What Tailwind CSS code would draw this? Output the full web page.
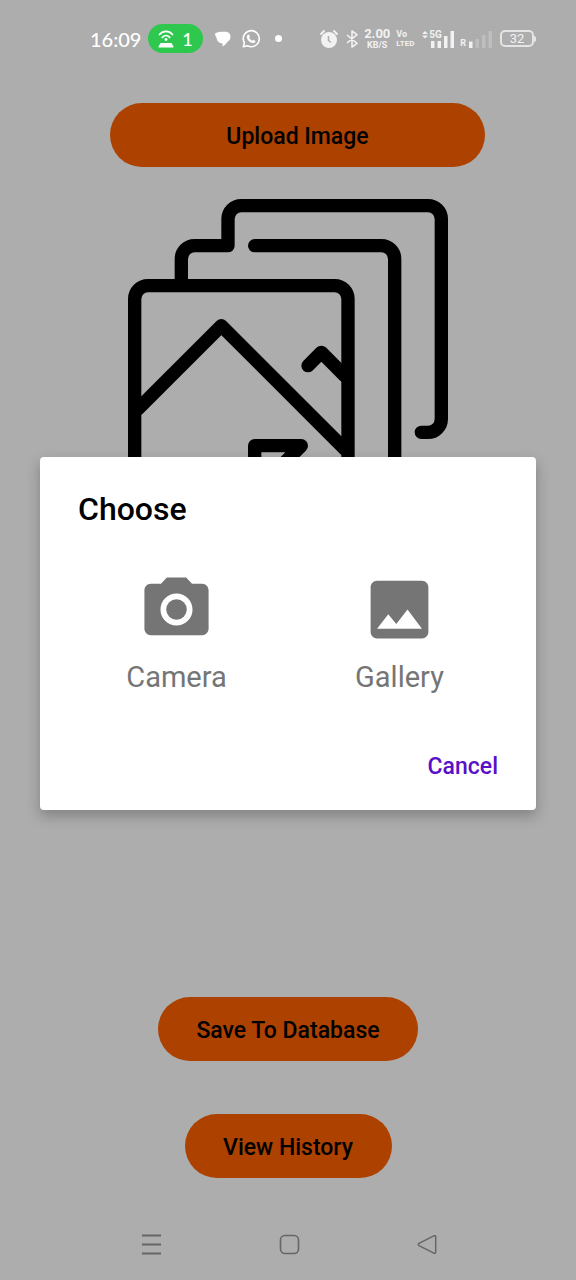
<!DOCTYPE html>
<html lang="en">
<head>
<meta charset="utf-8">
<meta name="viewport" content="width=device-width, initial-scale=1">
<title>Upload Image</title>
<script src="https://cdn.jsdelivr.net/npm/@tailwindcss/browser@4"></script>
</head>
<body class="bg-[#adadad] font-['Roboto',sans-serif] text-black">
<div class="relative flex min-h-screen flex-col">

  <!-- Status bar -->
  <header class="flex h-[77px] items-center justify-between pr-10 pl-[90px] text-white">
    <div class="flex items-center">
      <span class="w-[58px] font-['Lato',sans-serif] text-[20px] font-medium leading-6">16:09</span>
      <span class="flex h-[29px] w-[55px] items-center justify-center gap-2 rounded-full bg-[#2fc84e]">
        <svg class="h-[18px] w-4" viewBox="0 0 16 18" fill="none" stroke="currentColor" stroke-width="1.700" stroke-linecap="round" aria-hidden="true">
          <path d="M1.500 4.500C5 .3 11 .3 14.500 4.500M4.300 7.300c2.200-2.200 5.200-2.200 7.400 0"/>
          <circle cx="8" cy="9.500" r="1.400" fill="currentColor" stroke="none"/>
          <path d="M2.500 13h11l2 3.500q.3 1-.8 1H1.300q-1.100 0-.8-1z" fill="currentColor" stroke="none"/>
        </svg>
        <span class="font-['Lato',sans-serif] text-[18px] font-medium leading-6">1</span>
      </span>
      <svg class="ml-3 h-4 w-4" viewBox="0 0 16 16" fill="currentColor" aria-hidden="true">
        <path d="M5 .8h5.500c3.200 0 5 2.300 5 5 0 2.400-1.300 4.200-3.200 5.200-1.300 2-3 3.700-5 4.800.4-1.300.4-2.200.1-3.200C4.500 12.400 2.500 10.800 2 8.600 1.500 6.500.9 5.400.2 4.200-.3 2.500.7 1.600 2.200 1.400z"/>
      </svg>
      <svg class="ml-2.5 h-5 w-5" viewBox="0 0 20 20" fill="none" stroke="currentColor" stroke-width="1.600" aria-hidden="true">
        <path d="M2.300 17.800l1.100-4A8 8 0 1 1 6.400 16.700z" stroke-linejoin="round"/>
        <path d="M6.800 5.700l1.200-.2 1 2.200-.8 1.100c.7 1.400 1.700 2.400 3.100 3l1-1 2.200 1.100c0 1.400-1.200 2.300-2.400 2.200C8.800 13.800 6 11 5.800 8c0-1 .4-1.800 1-2.300z" fill="currentColor" stroke="none"/>
      </svg>
      <span class="ml-[14px] size-[7px] rounded-full bg-white"></span>
    </div>

    <div class="flex items-center text-[#f2f2f2]">
      <svg class="h-5 w-[18px]" viewBox="0 0 18 20" fill="none" stroke="currentColor" aria-hidden="true">
        <circle cx="9" cy="11" r="8" fill="currentColor" stroke="none"/>
        <path d="M1 5l3-3M17 5l-3-3" stroke-width="1.800" stroke-linecap="round"/>
        <path d="M8.500 7v4.500l2.500 2" stroke="#adadad" stroke-width="1.500"/>
      </svg>
      <svg class="ml-2 h-[18px] w-3" viewBox="0 0 12 18" fill="none" stroke="currentColor" stroke-width="1.600" stroke-linejoin="round" aria-hidden="true">
        <path d="M1 5l10 8.300L6 17V1l5 3.700L1 13"/>
      </svg>
      <span class="ml-[5px] flex w-7 flex-col items-center gap-px font-bold">
        <span class="text-[13px] leading-[12px]">2.00</span>
        <span class="text-[9px] leading-[9px]">KB/S</span>
      </span>
      <span class="ml-[5px] flex w-[21px] flex-col font-bold">
        <span class="text-[9px] leading-[9px]">Vo</span>
        <span class="text-[8px] leading-[9px]">LTED</span>
      </span>
      <span class="relative ml-[5px] h-[18px] w-[33px]">
        <svg class="h-[18px] w-[33px]" viewBox="0 0 33 18" fill="currentColor" aria-hidden="true">
          <path d="M0 4l3-3 3 3zM0 5.500h6l-3 3zM9 11h3.500v7H9zM15.500 11H19v7h-3.500zM22 6h3.500v12H22zM28.500 1H32v17h-3.500z"/>
        </svg>
        <span class="absolute top-0 left-[7px] text-[10px] leading-[9px] font-bold">5G</span>
      </span>
      <span class="ml-[5px] flex items-end">
        <span class="text-[9px] leading-[9px] font-bold">R</span>
        <svg class="ml-[3px] h-[18px] w-6" viewBox="0 0 24 18" fill="currentColor" aria-hidden="true">
          <path d="M0 11.500h3.500V18H0z"/>
          <path d="M6.500 9H10v9H6.500zM13 5h3.500v13H13zM19.500 1H23v17h-3.500z" opacity=".25"/>
        </svg>
      </span>
      <span class="ml-[7px] flex h-[17px] w-[34px] items-center justify-center rounded-[5px] border-2 border-[#e4e4e4] text-[13px] leading-[13px]">32</span>
      <span class="h-[6px] w-[2px] rounded-r bg-[#e4e4e4]"></span>
    </div>
  </header>

  <!-- Page content -->
  <main class="flex grow flex-col items-center">
    <div class="mt-[26px] flex w-full justify-center pl-[19px]">
      <button type="button" class="h-16 w-[375px] rounded-full bg-[#ad4100] pt-[3px] text-[23px] leading-7 font-medium">Upload Image</button>
    </div>
    <svg class="mt-8 size-80" viewBox="0 0 48 48" fill="none" stroke="currentColor" stroke-width="2" stroke-linecap="round" stroke-linejoin="round" role="img" aria-label="Image placeholder">
      <path d="M3 13h28a2 2 0 0 1 2 2v30a2 2 0 0 1-2 2H3a2 2 0 0 1-2-2V15a2 2 0 0 1 2-2z"/>
      <path d="M8 12.500V9a2 2 0 0 1 2-2h5V3a2 2 0 0 1 2-2h28a2 2 0 0 1 2 2v30a2 2 0 0 1-2 2h-1"/>
      <path d="M19 7h19a2 2 0 0 1 2 2v30a2 2 0 0 1-2 2h-1"/>
      <path d="M1.500 31.500l12.500-12.500 18.500 18.500M27 25l2-2 3.500 3.500M19 44v-7h7l-3 3"/>
    </svg>
    <div class="mt-auto flex flex-col items-center gap-[53px]">
      <button type="button" class="h-16 w-[260px] rounded-full bg-[#ad4100] pt-[3px] text-[23px] leading-7 font-medium">Save To Database</button>
      <button type="button" class="h-16 w-[207px] rounded-full bg-[#ad4100] pt-[3px] text-[23px] leading-7 font-medium">View History</button>
    </div>
  </main>

  <!-- System navigation -->
  <nav class="mt-[30px] flex h-[72px] items-center justify-center gap-[117px] pl-[2px] text-[#666]" aria-label="System navigation">
    <button type="button" aria-label="Recent apps">
      <svg class="size-[21px]" viewBox="0 0 21 21" fill="none" stroke="currentColor" stroke-width="1.800"><path d="M1 1.500h19M1 10.500h19M1 19.500h19"/></svg>
    </button>
    <button type="button" aria-label="Home">
      <svg class="size-[21px]" viewBox="0 0 21 21" fill="none" stroke="currentColor" stroke-width="1.600"><rect x="1.500" y="1.500" width="18" height="18" rx="4.500"/></svg>
    </button>
    <button type="button" aria-label="Back">
      <svg class="size-[21px]" viewBox="0 0 21 21" fill="none" stroke="currentColor" stroke-width="1.500" stroke-linejoin="round"><path d="M2 9.300L16.800 1.800q1.700-.6 1.900 1v15.400q-.2 1.600-1.900 1L2 11.700q-1.500-1.200 0-2.400z"/></svg>
    </button>
  </nav>

  <!-- Image source dialog -->
  <div class="absolute inset-0 flex items-center px-10 pb-[13px]">
    <section role="dialog" aria-modal="true" aria-labelledby="dialog-title" class="w-full rounded-[4px] bg-white pt-8 pb-6 shadow-[0_6px_14px_rgba(0,0,0,0.25)]">
      <h1 id="dialog-title" class="px-[38px] text-[32px] leading-10 font-medium">Choose</h1>
      <div class="mt-[42px] grid grid-cols-2 px-[25px] text-[29px] leading-9 text-[#757575]">
        <button type="button" class="flex flex-col items-center gap-[11px]">
          <svg class="size-[77px]" viewBox="0 0 24 24" fill="currentColor" aria-hidden="true"><circle cx="12" cy="12" r="3.200"/><path d="M9 2L7.170 4H4c-1.100 0-2 .9-2 2v12c0 1.100.9 2 2 2h16c1.100 0 2-.9 2-2V6c0-1.100-.9-2-2-2h-3.170L15 2H9zm3 15c-2.760 0-5-2.240-5-5s2.240-5 5-5 5 2.240 5 5-2.240 5-5 5z"/></svg>
          Camera
        </button>
        <button type="button" class="flex flex-col items-center gap-[11px]">
          <svg class="size-[77px]" viewBox="0 0 24 24" fill="currentColor" aria-hidden="true"><path d="M21 19V5c0-1.100-.9-2-2-2H5c-1.100 0-2 .9-2 2v14c0 1.100.9 2 2 2h14c1.100 0 2-.9 2-2zM8.500 13.500l2.500 3.010L14.500 12l4.500 6H5l3.500-4.500z"/></svg>
          Gallery
        </button>
      </div>
      <div class="mt-[52px] flex justify-end pr-[38px]">
        <button type="button" class="h-[39px] text-[23px] leading-7 font-medium text-[#5a0fc8]">Cancel</button>
      </div>
    </section>
  </div>
</div>
</body>
</html>
